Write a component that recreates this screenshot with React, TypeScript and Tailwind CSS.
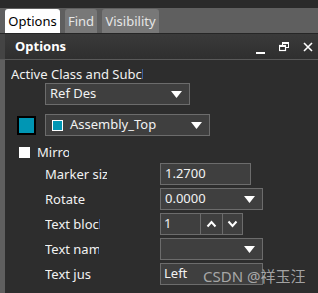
import React from "react";

const Tri = () => (
  <svg width="11" height="7" viewBox="0 0 11 7" className="block">
    <polygon points="0,0 11,0 5.5,7" fill="#ffffff" />
  </svg>
);

const Dropdown = ({ w, children }: { w: string; children?: React.ReactNode }) => (
  <div className={`${w} h-[22px] bg-[#3f3f3f] border border-[#6c6c6c] flex items-center`}>
    <div className="flex-1 flex items-center overflow-hidden whitespace-nowrap">{children}</div>
    <div className="pr-[7px]">
      <Tri />
    </div>
  </div>
);

const Label = ({ w, children }: { w: string; children: React.ReactNode }) => (
  <div className={`${w} ml-[40px] overflow-hidden whitespace-nowrap text-[13px] text-[#f2f2f2] leading-[22px]`}>
    {children}
  </div>
);

export default function App() {
  return (
    <div
      className="w-[318px] h-[293px] bg-[#2d2d2d] overflow-hidden flex flex-col relative"
      style={{ fontFamily: '"Noto Sans", "Noto Sans CJK SC", sans-serif' }}
    >
      <div className="h-[8px] bg-[#2a2a2a]" />
      <div className="h-[25px] bg-[#5f5f5f] flex items-end pl-[5px] gap-[5px]">
        <div className="w-[55px] h-[24px] bg-white rounded-t-[3px] text-[13px] text-black flex items-center justify-center leading-none">
          Options
        </div>
        <div className="w-[32px] h-[24px] bg-[#787878] rounded-t-[3px] text-[13px] text-[#e6e6e6] flex items-center justify-center leading-none">
          Find
        </div>
        <div className="w-[57px] h-[24px] bg-[#787878] rounded-t-[3px] text-[13px] text-[#e6e6e6] flex items-center justify-center leading-none">
          Visibility
        </div>
      </div>
      <div className="h-[1px] bg-[#262626]" />
      <div className="h-[26px] flex bg-gradient-to-b from-[#3a3a3a] to-[#2f2f2f] border-b border-[#595959]">
        <div className="w-[5px] bg-[#444444]" />
        <div className="flex-1 flex items-center">
          <div className="ml-[10px] text-[13px] font-bold text-white leading-none">Options</div>
          <div className="flex-1" />
          <svg width="10" height="10" viewBox="0 0 10 10" className="mr-[13px] mt-[6px]">
            <rect x="0" y="7" width="9" height="2" fill="#ffffff" />
          </svg>
          <svg width="10" height="10" viewBox="0 0 10 10" className="mr-[14px]">
            <rect x="3.5" y="0.5" width="6" height="5" fill="none" stroke="#ffffff" strokeWidth="1" />
            <rect x="0.5" y="3.5" width="6" height="5" fill="#2f2f2f" stroke="#ffffff" strokeWidth="1.2" />
            <rect x="0.5" y="3.5" width="6" height="1.5" fill="#ffffff" />
            <rect x="3.5" y="0.5" width="6" height="1.5" fill="#ffffff" />
          </svg>
          <svg width="10" height="10" viewBox="0 0 10 10" className="mr-[5px]">
            <path d="M1 1 L9 9 M9 1 L1 9" stroke="#ffffff" strokeWidth="1.6" />
          </svg>
        </div>
      </div>
      <div className="flex-1 flex">
        <div className="w-[5px] bg-[#5f5f5f]" />
        <div className="flex-1 flex flex-col pt-[5px]">
          <div className="ml-[6px] w-[132px] overflow-hidden whitespace-nowrap text-[13px] text-[#f2f2f2] leading-[18px]">
            Active Class and Subclass
          </div>
          <div className="ml-[40px]">
            <Dropdown w="w-[145px]">
              <span className="ml-[4px] text-[13px] text-[#f2f2f2]">Ref Des</span>
            </Dropdown>
          </div>
          <div className="mt-[9px] flex items-center">
            <div className="ml-[12px] w-[19px] h-[19px] bg-[#0096b4] border-2 border-black" />
            <div className="ml-[9px]">
              <Dropdown w="w-[165px]">
                <div className="ml-[6px] w-[11px] h-[11px] bg-[#0096b4] border border-white" />
                <span className="ml-[7px] text-[13px] text-[#f2f2f2]">Assembly_Top</span>
              </Dropdown>
            </div>
          </div>
          <div className="mt-[10px] h-[13px] flex items-center">
            <div className="ml-[14px] w-[11px] h-[11px] bg-white" />
            <div className="ml-[7px] w-[32px] overflow-hidden whitespace-nowrap text-[13px] text-[#f2f2f2]">
              Mirror
            </div>
          </div>
          <div className="mt-[4px] flex flex-col gap-[3px]">
            <div className="flex h-[22px]">
              <Label w="w-[62px]">Marker size</Label>
              <div className="ml-[53px] w-[91px] h-[22px] bg-[#3f3f3f] border border-[#6c6c6c] flex items-center">
                <span className="ml-[4px] text-[13px] text-[#f2f2f2]">1.2700</span>
              </div>
            </div>
            <div className="flex h-[22px]">
              <Label w="w-[62px]">Rotate</Label>
              <div className="ml-[53px]">
                <Dropdown w="w-[103px]">
                  <span className="ml-[4px] text-[13px] text-[#f2f2f2]">0.0000</span>
                </Dropdown>
              </div>
            </div>
            <div className="flex h-[22px]">
              <Label w="w-[55px]">Text block</Label>
              <div className="ml-[60px] w-[83px] h-[22px] bg-[#3f3f3f] border border-[#6c6c6c] flex">
                <div className="w-[39px] flex items-center">
                  <span className="ml-[3px] text-[13px] text-[#f2f2f2]">1</span>
                </div>
                <div className="w-[22px] border-l border-[#6c6c6c] flex items-center justify-center">
                  <svg width="11" height="8" viewBox="0 0 11 8">
                    <path d="M1.5 6.5 L5.5 2 L9.5 6.5" fill="none" stroke="#ffffff" strokeWidth="2" />
                  </svg>
                </div>
                <div className="flex-1 border-l border-[#6c6c6c] flex items-center justify-center">
                  <svg width="11" height="8" viewBox="0 0 11 8">
                    <path d="M1.5 1.5 L5.5 6 L9.5 1.5" fill="none" stroke="#ffffff" strokeWidth="2" />
                  </svg>
                </div>
              </div>
            </div>
            <div className="flex h-[22px]">
              <Label w="w-[54px]">Text name</Label>
              <div className="ml-[61px]">
                <Dropdown w="w-[103px]" />
              </div>
            </div>
            <div className="flex h-[22px]">
              <Label w="w-[46px]">Text just</Label>
              <div className="ml-[69px] w-[103px] h-[22px] bg-[#3f3f3f] border border-[#6c6c6c] flex items-center">
                <span className="ml-[3px] text-[13px] text-[#f2f2f2]">Left</span>
              </div>
            </div>
          </div>
        </div>
      </div>
      <div className="absolute left-[203px] top-[265px] text-[15px] text-[#c4c4c4]/80 leading-[22px] whitespace-nowrap">
        CSDN @祥玉汪
      </div>
    </div>
  );
}
